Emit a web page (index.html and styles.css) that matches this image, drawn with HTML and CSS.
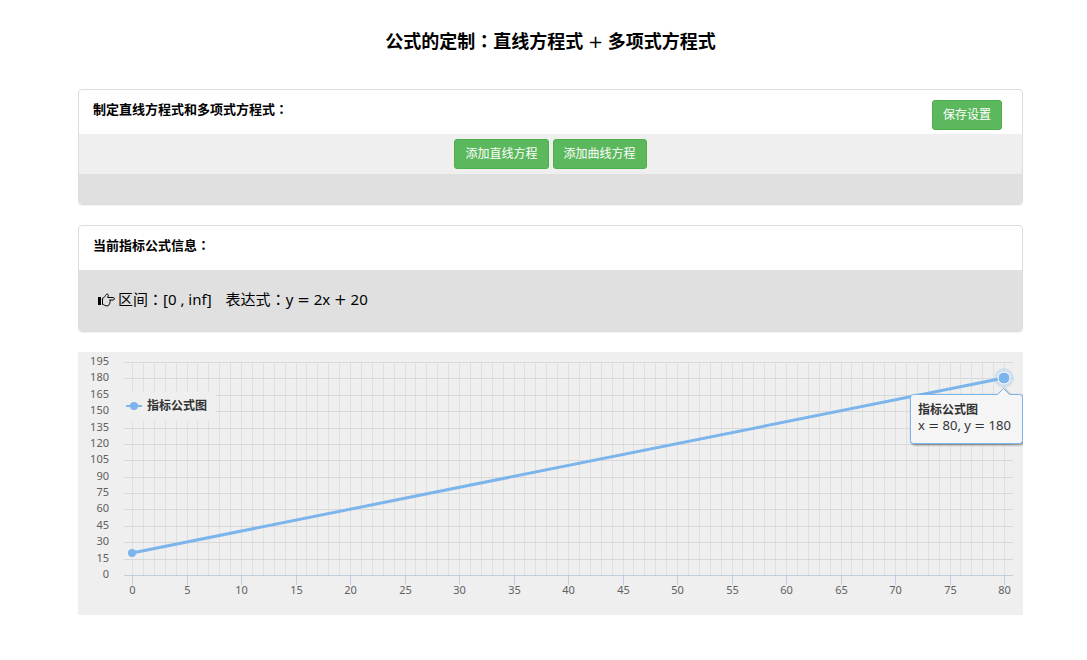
FILE: index.html
```html
<!DOCTYPE html>
<html lang="zh-CN">
<head>
<meta charset="utf-8">
<title>公式的定制</title>
<link rel="stylesheet" href="styles.css">
</head>
<body>
<main class="container">
  <h1 class="title">公式的定制<span class="colon" lang="zh-TW">：</span>直线方程式 <span class="op">+</span> 多项式方程式</h1>

  <section class="panel">
    <header class="panel-header">
      <h2 class="panel-title">制定直线方程式和多项式方程式<span class="colon" lang="zh-TW">：</span></h2>
      <button class="btn" type="button">保存设置</button>
    </header>
    <div class="toolbar">
      <button class="btn" type="button">添加直线方程</button>
      <button class="btn" type="button">添加曲线方程</button>
    </div>
    <div class="panel-footer"></div>
  </section>

  <section class="panel">
    <header class="panel-header">
      <h2 class="panel-title">当前指标公式信息<span class="colon" lang="zh-TW">：</span></h2>
    </header>
    <div class="formula">
      <svg class="hand" viewBox="0 0 17 14" aria-hidden="true">
        <path class="cuff" d="M0 4h3v8H0z"/>
        <path d="M4.5 11.5V5.2C6.5 5 7.2 2.600 8.200 1.500C9 .6 10.500 1.200 10.300 2.500L9.600 4.500H15.200C16.800 4.500 16.800 7 15.200 7H11.500C12.800 7.200 12.600 9 11.600 9.200C12.300 9.900 11.900 11 11 11.100C11.300 12.200 10.500 12.800 9.500 12.800H8C6.600 12.800 6.200 11.500 4.500 11.500"/>
      </svg>
      <span>区间<span class="colon" lang="zh-TW">：</span>[0 , inf]</span>
      <span class="expression">表达式<span class="colon" lang="zh-TW">：</span>y <span class="op">=</span> 2x <span class="op">+</span> 20</span>
    </div>
  </section>

  <svg class="chart" id="chart" viewBox="0 0 945 263" role="img" aria-label="指标公式图">
    <g id="grid"></g>
    <g id="labels"></g>
    <path class="series" d="M54 201L926 26"/>
    <circle class="point" cx="54" cy="201" r="4"/>
    <g>
      <rect class="legend-box" x="46" y="40" width="92" height="29"/>
      <path class="legend-line" d="M48 54H64"/>
      <circle class="point" cx="56" cy="54" r="4"/>
      <text class="legend-text" x="69" y="58">指标公式图</text>
    </g>
    <circle class="halo" cx="926" cy="26" r="10"/>
    <circle class="point-active" cx="926" cy="26" r="6"/>
    <path class="tooltip" d="M835.500 42.500H919.500L925.500 36.500L931.500 42.500H941.500Q944.500 42.500 944.500 45.500V88.500Q944.500 91.500 941.500 91.500H835.500Q832.500 91.500 832.500 88.500V45.500Q832.500 42.500 835.500 42.500Z"/>
    <text class="legend-text" x="840" y="62">指标公式图</text>
    <text class="tooltip-text" x="840" y="78">x <tspan class="op">=</tspan> 80, y <tspan class="op">=</tspan> 180</text>
  </svg>
</main>
<script src="script.js"></script>
</body>
</html>
```
FILE: styles.css
```css
* {
  box-sizing: border-box;
}

body {
  margin: 0;
  background: #fff;
  color: #000;
  font-family: "Noto Sans", "Noto Sans CJK SC", sans-serif;
  font-size: 13px;
  line-height: 20px;
}

.container {
  padding: 27px 64px 45px 78px;
}

.colon {
  font-family: "Noto Sans CJK TC", sans-serif;
  line-height: 1;
}

.op {
  font-family: "DejaVu Sans", sans-serif;
  font-weight: normal;
  line-height: 1;
}

.title {
  margin: 0 0 34px;
  font-size: 18px;
  line-height: 28px;
  text-align: center;
}

.panel {
  margin-bottom: 20px;
  border: 1px solid #ddd;
  border-radius: 4px;
  overflow: hidden;
  box-shadow: 0 1px 1px rgba(0, 0, 0, 0.05);
}

.panel-header {
  display: flex;
  justify-content: space-between;
  align-items: flex-start;
  height: 44px;
  padding: 10px 20px 0 14px;
}

.panel-title {
  margin: 0;
  font-size: 13px;
  line-height: 18px;
}

.btn {
  height: 30px;
  padding: 0 10px;
  border: 1px solid #4cae4c;
  border-radius: 3px;
  background: #5cb85c;
  color: #fff;
  font: 12px/18px "Noto Sans", "Noto Sans CJK SC", sans-serif;
}

.toolbar {
  display: flex;
  justify-content: center;
  gap: 4px;
  padding: 5px;
  background: #efefef;
}

.panel-footer {
  height: 30px;
  background: #e0e0e0;
}

.formula {
  display: flex;
  align-items: center;
  padding: 19px 19px 21px;
  background: #e0e0e0;
  font-size: 15px;
  line-height: 21px;
}

.hand {
  width: 17px;
  height: 14px;
  margin-right: 3px;
  fill: none;
  stroke: #000;
}

.hand .cuff {
  fill: #000;
  stroke: none;
}

.expression {
  margin-left: 14px;
}

.chart {
  display: block;
  width: 100%;
  background: #efefef;
}

.minor {
  stroke: #e0e0e0;
}

.major {
  stroke: #d8d8d8;
}

.axis {
  stroke: #c0d0e0;
}

.tick-label {
  fill: #606060;
  font-size: 11px;
}

.label-x {
  text-anchor: middle;
}

.label-y {
  text-anchor: end;
}

.series {
  stroke: #7cb5ec;
  stroke-width: 3;
  stroke-linecap: round;
}

.point {
  fill: #7cb5ec;
}

.point-active {
  fill: #7cb5ec;
  stroke: #fff;
}

.halo {
  fill: #7cb5ec;
  fill-opacity: 0.25;
}

.legend-box {
  fill: #efefef;
}

.legend-line {
  stroke: #7cb5ec;
  stroke-width: 2;
}

.legend-text {
  fill: #333;
  font-size: 12px;
  font-weight: bold;
}

.tooltip {
  fill: #f9f9f9;
  fill-opacity: 0.97;
  stroke: #7cb5ec;
  filter: drop-shadow(1px 1px 1px rgba(0, 0, 0, 0.5));
}

.tooltip-text {
  fill: #333;
  font-size: 13px;
}
```
FILE: script.js
```js
const NS = "http://www.w3.org/2000/svg";
const plot = { left: 46, right: 935, top: 10, bottom: 223, zero: 54, stepX: 10.9 };
const grid = document.getElementById("grid");
const labels = document.getElementById("labels");

function line(d, className) {
  const path = document.createElementNS(NS, "path");
  path.setAttribute("d", d);
  path.setAttribute("class", className);
  grid.appendChild(path);
}

function label(value, x, y, className) {
  const text = document.createElementNS(NS, "text");
  text.setAttribute("x", x);
  text.setAttribute("y", y);
  text.setAttribute("class", "tick-label " + className);
  text.textContent = value;
  labels.appendChild(text);
}

for (let i = 0; i <= 80; i++) {
  const x = Math.round(plot.zero + i * plot.stepX) + 0.5;
  line(`M${x} ${plot.top}V${plot.bottom}`, "minor");
  if (i % 5 === 0) {
    line(`M${x} ${plot.bottom}v10`, "axis");
    label(i, x, 242, "label-x");
  }
}

for (let i = 0; i <= 13; i++) {
  const y = Math.round(plot.bottom - i * (plot.bottom - plot.top) / 13) + 0.5;
  line(`M${plot.left} ${y}H${plot.right}`, i === 0 ? "axis" : "major");
  label(i * 15, 31, Math.round(y + 2), "label-y");
}
```
